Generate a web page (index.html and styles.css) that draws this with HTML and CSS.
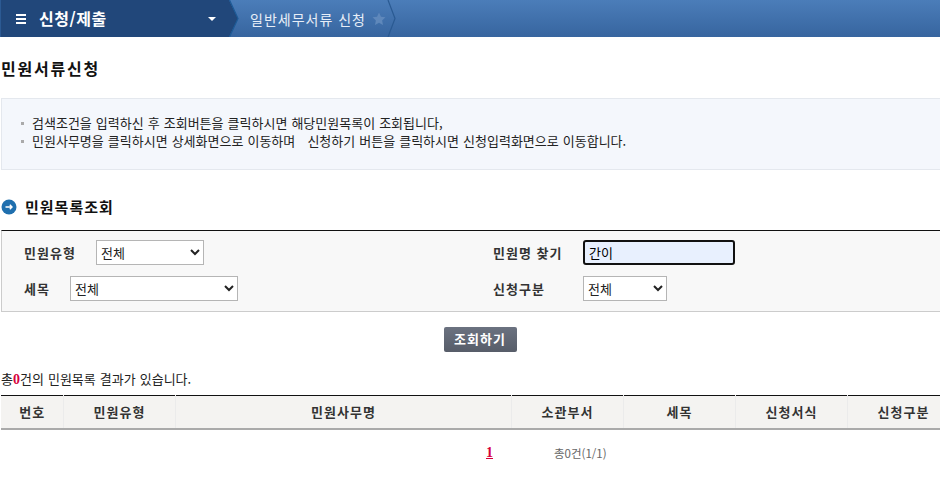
FILE: index.html
```html
<!DOCTYPE html>
<html lang="ko">
<head>
	<meta charset="utf-8">
	<title>민원서류신청</title>
	<link rel="stylesheet" href="styles.css">
</head>
<body>
<div class="topbar">
	<div class="menu">
		<span class="burger"><i></i><i></i><i></i></span>
		<span class="menu-name">신청/제출</span>
		<span class="caret"></span>
	</div>
	<svg class="menu-tip" width="10" height="37" viewBox="0 0 10 37">
		<path d="M0 0L9 18.500L0 37Z" fill="#21477a"/>
		<path d="M0.500 0L9 18.500L0.500 37" fill="none" stroke="#1d5a96" stroke-width="1.200"/>
	</svg>
	<div class="crumb">
		<span>일반세무서류 신청</span>
		<svg class="star" width="14" height="14" viewBox="0 0 24 24"><path d="M12 1l3.400 7.200 7.600 1-5.600 5.400 1.400 7.800L12 18.600 5.200 22.400l1.400-7.800L1 9.200l7.600-1z" fill="#5f88bb"/></svg>
		<svg class="crumb-tip" width="10" height="37" viewBox="0 0 10 37"><path d="M1 0L8 18.500L1 37" fill="none" stroke="#2a5a92" stroke-width="1.200"/></svg>
	</div>
</div>

<h1 class="page-title">민원서류신청</h1>

<div class="notice">
	<p>검색조건을 입력하신 후 조회버튼을 클릭하시면 해당민원목록이 조회됩니다,</p>
	<p>민원사무명을 클릭하시면 상세화면으로 이동하며 &nbsp; 신청하기 버튼을 클릭하시면 신청입력화면으로 이동합니다.</p>
</div>

<h2 class="sub-title">
	<svg width="16" height="16" viewBox="0 0 16 16">
		<circle cx="8" cy="8" r="7.500" fill="#1f6fae"/>
		<path d="M4.500 8H11M8.800 5.800L11 8L8.800 10.200" fill="none" stroke="#fff" stroke-width="1.400"/>
	</svg>
	민원목록조회
</h2>

<div class="search">
	<div class="search-col">
		<div class="field">
			<label class="w-type">민원유형</label>
			<select class="sel-type"><option>전체</option></select>
		</div>
		<div class="field">
			<label class="w-item">세목</label>
			<select class="sel-item"><option>전체</option></select>
		</div>
	</div>
	<div class="search-col">
		<div class="field">
			<label class="w-right">민원명 찾기</label>
			<input class="name-input" type="text" value="간이">
		</div>
		<div class="field">
			<label class="w-right">신청구분</label>
			<select class="sel-gubun"><option>전체</option></select>
		</div>
	</div>
</div>

<div class="btn-row"><a href="#" class="btn">조회하기</a></div>

<p class="result">총<b>0</b>건의 민원목록 결과가 있습니다.</p>

<table class="list">
	<colgroup>
		<col class="c-no"><col class="c-wide"><col class="c-name"><col class="c-wide"><col class="c-wide"><col class="c-wide"><col class="c-wide">
	</colgroup>
	<thead>
		<tr>
			<th>번호</th>
			<th>민원유형</th>
			<th>민원사무명</th>
			<th>소관부서</th>
			<th>세목</th>
			<th>신청서식</th>
			<th>신청구분</th>
		</tr>
	</thead>
</table>

<div class="paging">
	<a href="#" class="page-num">1</a>
	<span class="page-total">총0건(1/1)</span>
</div>
</body>
</html>
```

FILE: styles.css
```css
*{margin: 0; padding: 0; box-sizing: border-box;}
html, body{ overflow: hidden; height: 494px; }
body{
	padding-left: 1px;
	background: #fff;
	color: #111;
	font-family: "Noto Sans CJK KR", "Liberation Sans", sans-serif;
	font-size: 13px;
}

/* top bar */
.topbar{
	display: flex;
	height: 37px;
	margin-left: -1px;
	background: linear-gradient(#4b7db9, #37659f);
	color: #fff;
}
.menu{
	display: flex;
	align-items: center;
	width: 229px;
	padding-left: 15px;
	background: #21477a;
	border-left: 1px solid #2c5a93;
}
.burger{
	display: flex;
	flex-direction: column;
	gap: 2px;
	width: 10px;
}
.burger i{
	display: block;
	height: 2px;
	background: #fff;
}
.menu-name{
	margin-left: 13px;
	font-size: 16px;
	font-weight: 700;
	line-height: 37px;
	letter-spacing: .5px;
}
.caret{
	margin-left: auto;
	margin-right: 13px;
	border-top: 4px solid #fff;
	border-left: 4px solid transparent;
	border-right: 4px solid transparent;
}
.menu-tip{ display: block; flex: none; }
.crumb{
	display: flex;
	align-items: center;
	margin-left: 11px;
	font-size: 14px;
	letter-spacing: 1px;
	color: #e8eef7;
}
.star{ margin-left: 6px; }
.crumb-tip{ margin-left: 1px; }

.page-title{
	margin-top: 19px;
	font-size: 16px;
	font-weight: 700;
	line-height: 24px;
	letter-spacing: 1.800px;
}

/* notice */
.notice{
	margin-top: 18px;
	height: 72px;
	padding: 15px 0 0 19px;
	background: #f4f7fc;
	border: 1px solid #e4e8ee;
	border-right: 0;
	line-height: 18px;
}
.notice p{
	position: relative;
	padding-left: 11px;
	word-spacing: .4px;
	white-space: nowrap;
	color: #222;
}
.notice p::before{
	content: "";
	position: absolute;
	left: 0;
	top: 8px;
	width: 3px;
	height: 3px;
	background: #aaa;
}

.sub-title{
	display: flex;
	align-items: center;
	gap: 8px;
	margin-top: 26px;
	font-size: 15px;
	font-weight: 700;
	line-height: 22px;
	letter-spacing: 1px;
}

/* search box */
.search{
	display: flex;
	margin-top: 12px;
	height: 82px;
	padding: 9px 0 0 22px;
	background: #f8f8f8;
	border-top: 1px solid #111;
	border-bottom: 1px solid #ccc;
	border-left: 1px solid #ccc;
}
.search-col{
	display: flex;
	flex-direction: column;
	gap: 11px;
}
.search-col:first-child{ width: 469px; }
.field{
	display: flex;
	align-items: center;
	height: 25px;
}
.field label{
	font-weight: 700;
	letter-spacing: 1px;
	color: #333;
}
.w-type{ width: 72px; }
.w-item{ width: 46px; }
.w-right{ width: 90px; }
select{
	height: 25px;
	background: #fff;
	border: 1px solid #b5b5b5;
	font-family: inherit;
	font-size: 13px;
	color: #222;
}
.sel-type{ width: 108px; }
.sel-item{ width: 168px; }
.sel-gubun{ width: 84px; }
.name-input{
	width: 152px;
	height: 25px;
	padding-left: 4px;
	background: #e8f0fe;
	border: 2px solid #111;
	border-radius: 3px;
	font-family: inherit;
	font-size: 13px;
	outline: none;
}

.btn-row{
	display: flex;
	justify-content: center;
	margin-top: 15px;
	padding-left: 19px;
}
.btn{
	display: block;
	width: 73px;
	height: 25px;
	background: linear-gradient(#6b7280, #575d69);
	border-radius: 2px;
	color: #fff;
	font-weight: 700;
	letter-spacing: 1px;
	line-height: 24px;
	text-align: center;
	text-decoration: none;
}

.result{
	margin-top: 18px;
	line-height: 18px;
	word-spacing: .4px;
	color: #222;
}
.result b{
	color: #d6003c;
	font-family: "Liberation Serif", serif;
	font-size: 14px;
}

/* list */
.list{
	width: 958px;
	margin-top: 6px;
	border-collapse: collapse;
	table-layout: fixed;
}
.c-no{ width: 62px; }
.c-wide{ width: 112px; }
.c-name{ width: 336px; }
.list th{
	height: 33px;
	padding-left: 1px;
	background: #f4f3f1;
	border-top: 1px solid #111;
	border-bottom: 2px solid #aaa;
	border-right: 1px solid #ebebeb;
	font-weight: 700;
	letter-spacing: 1px;
	color: #333;
}

.paging{
	display: flex;
	align-items: center;
	margin-top: 14px;
	margin-left: 485px;
	line-height: 18px;
}
.page-num{
	font-family: "Liberation Serif", serif;
	font-size: 14px;
	font-weight: 700;
	color: #d6003c;
}
.page-total{
	margin-left: 61px;
	font-size: 11.500px;
	color: #666;
}
```
